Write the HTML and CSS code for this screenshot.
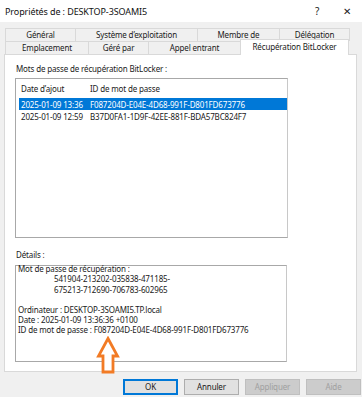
FILE: index.html
```html
<!DOCTYPE html>
<html lang="fr">
<head>
    <meta charset="UTF-8">
    <title>Propriétés de : DESKTOP-3SOAMI5</title>
    <link rel="stylesheet" href="styles.css">
</head>
<body>
    <div class="dialog">
        <div class="titlebar">
            <span class="title">Propriétés de : DESKTOP-3SOAMI5</span>
            <span class="tb-btn help">?</span>
            <span class="tb-btn close">✕</span>
        </div>

        <!-- onglets sur deux rangées -->
        <div class="tabs">
            <div class="tab-row">
                <div class="tab w-general">Général</div>
                <div class="tab w-os">Système d’exploitation</div>
                <div class="tab w-member">Membre de</div>
                <div class="tab w-deleg">Délégation</div>
            </div>
            <div class="tab-row">
                <div class="tab w-place">Emplacement</div>
                <div class="tab w-managed">Géré par</div>
                <div class="tab w-dialin">Appel entrant</div>
                <div class="tab w-bitlocker active">Récupération BitLocker</div>
            </div>
        </div>

        <div class="panel">
            <div class="group-label">Mots de passe de récupération BitLocker :</div>
            <div class="listbox">
                <div class="lv-head">
                    <span class="col-date">Date d’ajout</span>
                    <span class="col-id">ID de mot de passe</span>
                </div>
                <div class="lv-row selected">
                    <span class="col-date">2025-01-09 13:36</span>
                    <span class="col-id">F087204D-E04E-4D68-991F-D801FD673776</span>
                </div>
                <div class="lv-row">
                    <span class="col-date">2025-01-09 12:59</span>
                    <span class="col-id">B37D0FA1-1D9F-42EE-881F-BDA57BC824F7</span>
                </div>
            </div>

            <div class="group-label details-label">Détails :</div>
            <div class="details">
                <div class="details-text">
                    <div>Mot de passe de récupération :</div>
                    <div class="indent">541904-213202-035838-471185-</div>
                    <div class="indent">675213-712690-706783-602965</div>
                    <div class="blank"></div>
                    <div>Ordinateur : DESKTOP-3SOAMI5.TP.local</div>
                    <div>Date : 2025-01-09 13:36:36 +0100</div>
                    <div>ID de mot de passe : F087204D-E04E-4D68-991F-D801FD673776</div>
                </div>
            </div>
        </div>

        <div class="buttons">
            <div class="btn default">OK</div>
            <div class="btn">Annuler</div>
            <div class="btn disabled">Appliquer</div>
            <div class="btn disabled">Aide</div>
        </div>

        <!-- flèche d'annotation -->
        <svg class="arrow" width="24" height="40" viewBox="0 0 24 40">
            <path d="M12 2.5 L21.5 20 L17 20 L17 36 L7 36 L7 20 L2.5 20 Z" fill="#ffffff" stroke="#f27b25" stroke-width="2.8" stroke-linejoin="miter"/>
        </svg>
    </div>
</body>
</html>
```

FILE: styles.css
```css
* {
    padding: 0px;
    margin: 0px;
    box-sizing: border-box;
}

body {
    width: 362px;
    height: 397px;
    overflow: hidden;
    background: #f0f0f0;
    font-family: "Noto Sans", "Open Sans", sans-serif;
    font-size: 8px;
    letter-spacing: -0.15px;
    color: #1a1a1a;
}

.dialog {
    position: relative;
    width: 362px;
    height: 397px;
}

/* barre de titre */
.titlebar {
    height: 22px;
    background: #ffffff;
    display: flex;
    align-items: center;
    padding-left: 5px;
}

.title {
    flex: 1;
    font-size: 9px;
    letter-spacing: -0.1px;
    color: #111111;
}

.tb-btn {
    width: 30px;
    text-align: center;
    font-size: 10px;
    color: #222222;
}

/* onglets */
.tabs {
    padding: 6px 0px 0px 5px;
}

.tab-row {
    display: flex;
    align-items: flex-end;
}

.tab {
    height: 13px;
    line-height: 12px;
    text-align: center;
    border: #d9d9d9 solid 1px;
    border-bottom: none;
    margin-right: -1px;
    background: #f0f0f0;
    white-space: nowrap;
}

.tab.active {
    height: 16px;
    margin-top: -2px;
    margin-bottom: -1px;
    background: #ffffff;
    line-height: 13px;
    position: relative;
    z-index: 1;
}

.w-general { width: 71px; }
.w-os { width: 123px; }
.w-member { width: 83px; }
.w-deleg { width: 71px; }
.w-place { width: 84px; }
.w-managed { width: 61px; }
.w-dialin { width: 93px; }
.w-bitlocker { width: 109px; }

/* page de l'onglet */
.panel {
    margin: 0px 5px 0px 4px;
    height: 318px;
    background: #ffffff;
    border: #d9d9d9 solid 1px;
    padding: 5px 0px 0px 10px;
}

.group-label {
    height: 18px;
    line-height: 17px;
    padding-left: 1px;
}

.listbox {
    width: 273px;
    height: 160px;
    border: #a8a8a8 solid 1px;
    border-right-color: #c8c8c8;
    background: #ffffff;
}

.lv-head {
    display: flex;
    height: 19px;
    align-items: center;
    padding-left: 5px;
    white-space: nowrap;
}

.lv-row {
    display: flex;
    height: 12px;
    align-items: center;
    margin-left: 3px;
    padding-left: 2px;
    white-space: nowrap;
}

.lv-row.selected {
    background: #0078d7;
    color: #ffffff;
}

.col-date {
    width: 68px;
    flex-shrink: 0;
}

.col-id {
    padding-left: 1px;
}

.details-label {
    margin-top: 8px;
    height: 19px;
    line-height: 18px;
}

.details {
    width: 272px;
    height: 97px;
    border: #a8a8a8 solid 1px;
    border-right-color: #c8c8c8;
    padding-left: 2px;
    line-height: 10.3px;
    white-space: nowrap;
}

.details-text {
    margin-top: -2px;
}

.details .indent {
    padding-left: 36px;
}

.details .blank {
    height: 10px;
}

/* boutons */
.buttons {
    display: flex;
    justify-content: flex-end;
    gap: 6px;
    padding: 7px 1px 0px 0px;
}

.btn {
    width: 55px;
    height: 16px;
    line-height: 14px;
    text-align: center;
    background: #e1e1e1;
    border: #adadad solid 1px;
}

.btn.default {
    border: #0078d7 solid 2px;
    line-height: 12px;
}

.btn.disabled {
    background: #cccccc;
    border-color: #bfbfbf;
    color: #a0a0a0;
}

.arrow {
    position: absolute;
    left: 96px;
    top: 336px;
}
```
